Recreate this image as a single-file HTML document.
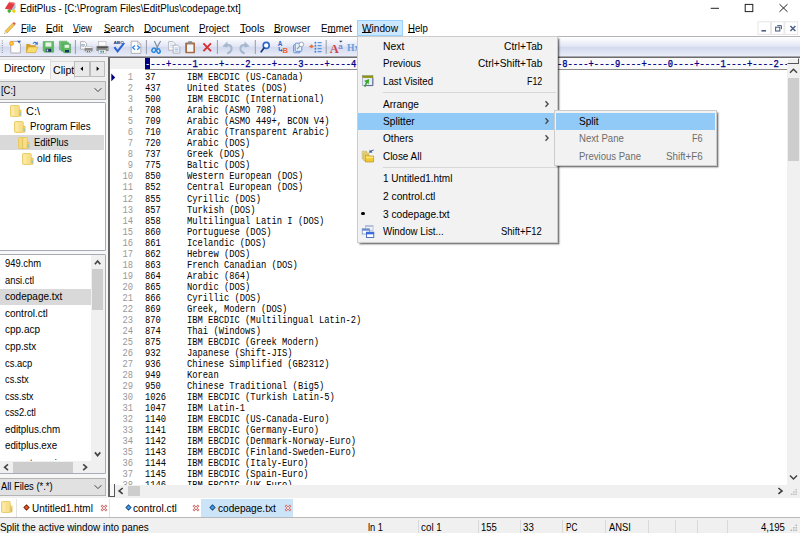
<!DOCTYPE html>
<html><head><meta charset="utf-8"><title>EditPlus</title>
<style>
*{box-sizing:border-box;margin:0;padding:0}
html,body{width:800px;height:533px;overflow:hidden;background:#f0f0f0}
body{position:relative;font-family:"Liberation Sans",sans-serif;color:#000}
.a{position:absolute;display:block}
.t{position:absolute;white-space:pre;line-height:1;color:#000;font-size:10.6px;transform-origin:0 0}
.m{position:absolute;white-space:pre;line-height:1;font-family:"Liberation Mono",monospace;font-size:10px;color:#000;transform:scaleX(.88);transform-origin:0 0}
u{text-decoration:underline;text-underline-offset:.3px;text-decoration-thickness:.9px}
</style></head><body>
<div class="a" style="left:0px;top:0px;width:800px;height:19px;background:#fff;"></div>
<svg class="a" style="left:3px;top:1px" width="14" height="13" viewBox="0 0 14 13"><path d="M8.500 9L12.300 2.200 12.700 6.400 10.900 9.800z" fill="#a9c3df"/><path d="M1.800 7.800L6.300 .8 12.300 2.100 8.500 9.100z" fill="#e23a40"/><path d="M6.300 .8L12.300 2.100 11.700 3.100 5.700 1.800z" fill="#f28a8a"/><path d="M6.300 7.900l2.100 2.200-2.100 2.200-2.100-2.200z" fill="#3cb034"/><path d="M10.900 7.900l2.100 2.200-2.100 2.200-2.100-2.200z" fill="#f2cf00"/></svg>
<div class="t" style="left:20.15px;top:3px;transform:scaleX(0.923);">EditPlus - [C:\Program Files\EditPlus\codepage.txt]</div>
<svg class="a" style="left:705px;top:0px" width="95" height="19" viewBox="0 0 95 19"><path d="M5.7 8.3h8.3" stroke="#222" stroke-width="1"/><rect x="40.2" y="4.4" width="7.6" height="7.2" fill="none" stroke="#222" stroke-width="1"/><path d="M74.5 4.2l8 7.6M82.5 4.2l-8 7.6" stroke="#222" stroke-width="1" fill="none"/></svg>
<div class="a" style="left:0px;top:19px;width:800px;height:17px;background:#fff;"></div>
<div class="a" style="left:0px;top:36px;width:800px;height:1px;background:#b4b4b4;"></div>
<div class="a" style="left:357px;top:20px;width:45.5px;height:16px;background:#cce8ff;border:1px solid #99d1ff;"></div>
<svg class="a" style="left:2px;top:20px" width="15" height="15" viewBox="0 0 15 15"><path d="M3 11.2 L10.6 3.2 L12.6 5 L5 13Z" fill="#f4c84a" stroke="#b8862a" stroke-width=".5"/><path d="M10.6 3.2l1.3-1.3 2 1.8-1.3 1.3z" fill="#e0525a"/><path d="M3 11.2L2.2 13.8 5 13z" fill="#e9d2a8"/><path d="M2.2 13.8l.9-.3-.6-.6z" fill="#333"/></svg>
<div class="t" style="left:20.75px;top:23px;transform:scaleX(0.890);"><u>F</u>ile</div>
<div class="t" style="left:45.55px;top:23px;transform:scaleX(0.925);"><u>E</u>dit</div>
<div class="t" style="left:72.85px;top:23px;transform:scaleX(0.830);"><u>V</u>iew</div>
<div class="t" style="left:103.55px;top:23px;transform:scaleX(0.890);"><u>S</u>earch</div>
<div class="t" style="left:143.95px;top:23px;transform:scaleX(0.930);"><u>D</u>ocument</div>
<div class="t" style="left:198.95px;top:23px;transform:scaleX(0.913);"><u>P</u>roject</div>
<div class="t" style="left:239.55px;top:23px;transform:scaleX(0.991);"><u>T</u>ools</div>
<div class="t" style="left:274.15px;top:23px;transform:scaleX(0.934);"><u>B</u>rowser</div>
<div class="t" style="left:320.85px;top:23px;transform:scaleX(0.921);">E<u>m</u>met</div>
<div class="t" style="left:361.55px;top:23px;transform:scaleX(0.958);"><u>W</u>indow</div>
<div class="t" style="left:408.05px;top:23px;transform:scaleX(0.908);"><u>H</u>elp</div>
<svg class="a" style="left:757px;top:21px" width="43" height="15" viewBox="0 0 43 15"><g fill="#fff" stroke="#e6e6e6" stroke-width="1"><rect x="1" y=".8" width="12.6" height="12.6"/><rect x="14.4" y=".8" width="12.6" height="12.6"/><rect x="27.8" y=".8" width="12.6" height="12.6"/></g>
<path d="M4.4 9.8h4.6" stroke="#4d6185" stroke-width="1.6"/>
<path d="M20.2 4.6h4.2v3.6" stroke="#4d6185" stroke-width="1" fill="none"/><rect x="18.6" y="6.2" width="4.2" height="3.8" fill="none" stroke="#4d6185" stroke-width="1.1"/>
<path d="M33.4 5l5 5M38.4 5l-5 5" stroke="#4d6185" stroke-width="1.5"/></svg>
<div class="a" style="left:0px;top:37px;width:800px;height:19px;background:linear-gradient(#ffffff 0%,#f1f3fa 25%,#e3e7f5 49%,#d3daee 53%,#dae0f1 70%,#e9ecf8 100%);"></div>
<div class="a" style="left:0px;top:55.6px;width:800px;height:1.3px;background:#a6a6ae;"></div>
<svg class="a" style="left:0;top:37px" width="360" height="20" viewBox="0 37 360 20">
<g fill="#9a9aa8"><rect x="1.8" y="40.4" width="1.1" height="1.1"/><rect x="1.8" y="42.7" width="1.1" height="1.1"/><rect x="1.8" y="45" width="1.1" height="1.1"/><rect x="1.8" y="47.3" width="1.1" height="1.1"/><rect x="1.8" y="49.6" width="1.1" height="1.1"/><rect x="1.8" y="51.9" width="1.1" height="1.1"/></g>
<g stroke="#9a9aa6" stroke-width="1"><path d="M75.4 40v14M146.4 40v14M217.4 40v14M255.3 40v14M326.2 40v14"/></g>
<!-- new -->
<path d="M10.8 41.4h7l2.6 2.4v9.2h-9.6z" fill="#fdfcf8" stroke="#a8a8b0" stroke-width=".9"/>
<path d="M17 40.8h4.2l-2.1 2.4z" fill="#3060b0"/>
<circle cx="11.6" cy="43.4" r="2.3" fill="#f8a020"/><circle cx="11.6" cy="43.4" r="1.2" fill="#ffd040"/>
<!-- open -->
<path d="M26.200 44h3.600l1 1.200h5v7.400h-9.600z" fill="#d2a028"/>
<path d="M28.4 47h9.4l-2.2 5.6h-9.4z" fill="#f9dc6c" stroke="#cfa22a" stroke-width=".5"/>
<path d="M32.6 43.6c1-1.8 2.8-2.2 4.2-1.2l.8-1 .4 3.4-3.2-.4.9-.9c-.8-.6-1.8-.5-2.4.4z" fill="#3878c8"/>
<!-- save -->
<path d="M43.2 41.6h10.4v10.6H44.6l-1.4-1.4z" fill="#5dba62" stroke="#3f9a44" stroke-width=".5"/>
<rect x="45.4" y="42.4" width="6" height="4.2" fill="#e8f4e8"/>
<rect x="45.8" y="48.8" width="5.4" height="3" fill="#203060"/><rect x="46.6" y="49.4" width="1.6" height="2" fill="#d0d8e8"/>
<!-- save all -->
<path d="M59.4 41.2h7.6v8.4h-7.6z" fill="#7cc880" stroke="#4aa04e" stroke-width=".5"/>
<path d="M61 42.6h7.8v8.4H61z" fill="#6cc070" stroke="#4aa04e" stroke-width=".5"/>
<path d="M62.8 44h7.8v8.8h-6.6l-1.2-1.2z" fill="#5dba62" stroke="#3f9a44" stroke-width=".5"/>
<rect x="64.6" y="44.8" width="4.6" height="3" fill="#e8f4e8"/><rect x="65" y="50" width="4" height="2.4" fill="#203060"/>
<!-- print preview -->
<path d="M80.6 41.6h4l2 2v5.6h-6z" fill="#fafafa" stroke="#9a9a9a" stroke-width=".7"/>
<rect x="81.8" y="44.2" width="2.6" height="2" fill="#b8d0e8" stroke="#7090b0" stroke-width=".4"/>
<rect x="85.2" y="46.2" width="6.8" height="2" fill="#f4f4f4" stroke="#aaa" stroke-width=".4"/>
<rect x="84.6" y="48" width="8" height="3.2" fill="#8a8a8a"/><rect x="86" y="50.6" width="5.2" height="2" fill="#f0f0f0" stroke="#999" stroke-width=".4"/>
<rect x="87" y="51" width="1.2" height="1.2" fill="#2080d0"/><rect x="89" y="51" width="1.2" height="1.2" fill="#30a040"/>
<!-- print -->
<rect x="98.6" y="41.6" width="7.4" height="4.4" fill="#fcfcfc" stroke="#aaa" stroke-width=".5"/>
<path d="M96.4 46h12.2v5H96.4z" fill="#8c8c8c"/><path d="M97.4 46.6h10.2v1.6H97.4z" fill="#505050"/>
<rect x="98.8" y="50" width="7.2" height="3.2" fill="#f4f4f4" stroke="#999" stroke-width=".4"/>
<rect x="100.4" y="50.8" width="1.4" height="1.8" fill="#2080d0"/><rect x="102.6" y="50.8" width="1.4" height="1.8" fill="#30a040"/><circle cx="107.4" cy="48.6" r=".7" fill="#70e070"/>
<!-- spell -->
<text x="113.400" y="44.300" font-family="Liberation Sans,sans-serif" font-size="4.300" font-weight="bold" fill="#203880" textLength="10.400" lengthAdjust="spacingAndGlyphs">ABC</text>
<path d="M114.400 47.200L117.600 51.400 124.200 42.900" fill="none" stroke="#2a62d4" stroke-width="2"/>
<!-- html page -->
<path d="M131.2 41.2h6.6l3 3v9.2h-9.6z" fill="#fdfdfd" stroke="#a0a0a8" stroke-width=".8"/><path d="M137.8 41.2v3h3" fill="none" stroke="#a0a0a8" stroke-width=".6"/>
<path d="M135 45.4l-2.4 2.2 2.4 2.2M137.2 45.4l2.4 2.2-2.4 2.2" fill="none" stroke="#3088e8" stroke-width="1.3"/>
<!-- cut -->
<path d="M154.4 41l3.4 7.6M160.6 41l-4.2 7.6" stroke="#8090a0" stroke-width="1.2" fill="none"/>
<ellipse cx="153.8" cy="50.2" rx="1.8" ry="2.2" fill="none" stroke="#2888e0" stroke-width="1.5" transform="rotate(25 153.8 50.2)"/>
<ellipse cx="158.4" cy="51" rx="1.7" ry="2.2" fill="none" stroke="#2888e0" stroke-width="1.5" transform="rotate(-20 158.4 51)"/>
<!-- copy -->
<path d="M168.6 41.6h4.4l2 2v6.6h-6.4z" fill="#fcfcfc" stroke="#a0a0a8" stroke-width=".7"/>
<path d="M170 44h3M170 45.6h3.4M170 47.2h3.4" stroke="#a8c4e0" stroke-width=".6"/>
<path d="M173.2 45.2h4.4l2.2 2v6h-6.6z" fill="#fcfcfc" stroke="#9898a0" stroke-width=".7"/>
<path d="M174.6 48h3.8M174.6 49.6h3.8M174.6 51.2h3.8" stroke="#80a8d8" stroke-width=".7"/>
<!-- paste -->
<rect x="185.2" y="42.6" width="9.8" height="10.6" rx=".8" fill="#a86a40"/>
<rect x="187" y="44.4" width="6.4" height="7.4" fill="#f0f6fc"/>
<rect x="188" y="41.2" width="4.2" height="2.6" rx=".6" fill="#8a8a90"/>
<!-- delete -->
<path d="M203.4 43.4l7.6 7.8M211 43.4l-7.6 7.8" stroke="#d83030" stroke-width="1.9" fill="none"/>
<!-- undo -->
<path d="M226.600 45.200C230.200 44.400 232.400 46.800 231.400 49.800 230.800 51.400 229.800 52.300 228.200 53" fill="none" stroke="#a6b8cf" stroke-width="2.300" stroke-linecap="round"/>
<path d="M222.300 46.400L227.400 41.400 227.800 47.600z" fill="#a6b8cf"/>
<!-- redo -->
<path d="M245.400 45.200C241.800 44.400 239.600 46.800 240.600 49.800 241.200 51.400 242.200 52.300 243.800 53" fill="none" stroke="#a6b8cf" stroke-width="2.300" stroke-linecap="round"/>
<path d="M249.700 46.400L244.600 41.400 244.200 47.600z" fill="#a6b8cf"/>
<!-- find -->
<circle cx="266.200" cy="45.4" r="3" fill="#fff" stroke="#2868c8" stroke-width="1.6"/>
<path d="M264 48l-2.800 3.800" stroke="#183878" stroke-width="1.7" stroke-linecap="round"/>
<!-- replace -->
<text x="277.800" y="46.4" font-family="Liberation Sans,sans-serif" font-size="6.4" font-weight="bold" fill="#2868c8">A</text>
<path d="M279.200 47v3.400h2.400" fill="none" stroke="#2868c8" stroke-width="1"/><path d="M281 49l1.800 1.400-1.800 1.400z" fill="#2868c8"/>
<text x="282.600" y="53" font-family="Liberation Sans,sans-serif" font-size="7.6" font-weight="bold" fill="#f06030">B</text>
<!-- find in files -->
<rect x="293.600" y="44.6" width="6.600" height="8.200" rx="1" fill="#dce8f8" stroke="#5888d0" stroke-width=".9"/>
<rect x="295.200" y="43.200" width="6.600" height="8.200" rx="1" fill="#e4eefa" stroke="#5888d0" stroke-width=".9"/>
<circle cx="301.400" cy="44.400" r="2.300" fill="#fff" stroke="#a0a8b4" stroke-width="1"/>
<path d="M299.800 46.200l-2.800 3" stroke="#909aa8" stroke-width="1.200"/>
<!-- goto -->
<path d="M309 46.400h2.800M311 44.800l2.400 1.600-2.400 1.600z" stroke="#f07030" stroke-width="1" fill="#f07030"/>
<g fill="#3880e0"><rect x="314.600" y="41.800" width="1.600" height="1.800"/><rect x="314.600" y="44.800" width="1.600" height="1.800"/><rect x="314.600" y="47.800" width="1.600" height="1.800"/><rect x="314.600" y="50.800" width="1.600" height="1.800"/>
<rect x="317.600" y="42.200" width="4" height="1"/><rect x="317.600" y="45.200" width="4" height="1"/><rect x="317.600" y="48.200" width="4" height="1"/><rect x="317.600" y="51.200" width="4" height="1"/></g>
<!-- font -->
<text x="329.800" y="52.600" font-family="Liberation Serif,serif" font-size="12.500" font-weight="bold" fill="#cc4450">A</text>
<text x="338.200" y="49.200" font-family="Liberation Sans,sans-serif" font-size="8" fill="#6468c8">a</text>
<path d="M339 40.800h3.600l-1.800 1.800z" fill="#303848"/>
<text x="347" y="51.400" font-family="Liberation Serif,serif" font-size="9.600" font-weight="bold" fill="#66a0dc">Hx</text>
</svg>

<div class="a" style="left:0px;top:59px;width:50.5px;height:20px;background:#fff;border-right:1px solid #dcdcdc;border-top:1px solid #e4e4e4;"></div>
<div class="a" style="left:50.5px;top:61px;width:24px;height:17.5px;background:#f3f3f3;border:1px solid #dcdcdc;border-left:none;border-bottom:none;"></div>
<div class="t" style="left:4.05px;top:63px;transform:scaleX(0.965);">Directory</div>
<div class="t" style="left:53.05px;top:65px;">Clipt</div>
<div class="a" style="left:74px;top:61px;width:15.5px;height:16px;background:#e9e9e9;border:1px solid #bdbdbd;"></div>
<div class="a" style="left:89.5px;top:61px;width:15.5px;height:16px;background:#e9e9e9;border:1px solid #bdbdbd;"></div>
<svg class="a" style="left:74px;top:61px" width="31" height="16" viewBox="0 0 31 16"><path d="M9 5.6v4.4l-2.6-2.2z" fill="#000"/><path d="M22.6 5.6v4.4l2.6-2.2z" fill="#000"/></svg>
<div class="a" style="left:0px;top:80.5px;width:105.5px;height:19px;background:#e1e1e1;border:1px solid #b4b4b4;border-left:none;"></div>
<div class="t" style="left:1.35px;top:85px;transform:scaleX(0.886);">[C:]</div>
<svg class="a" style="left:93px;top:86px" width="10" height="8" viewBox="0 0 10 8"><path d="M1.6 2.2l3.4 3.4 3.4-3.4" fill="none" stroke="#444" stroke-width="1"/></svg>
<div class="a" style="left:0px;top:100px;width:108px;height:3px;background:#f7f7f7;"></div>
<div class="a" style="left:0px;top:250px;width:108px;height:4.5px;background:#f7f7f7;"></div>
<div class="a" style="left:0px;top:473.5px;width:108px;height:4.5px;background:#f7f7f7;"></div>
<div class="a" style="left:106px;top:100px;width:2.3px;height:397px;background:#f6f6f6;"></div>
<div class="a" style="left:0px;top:102px;width:106px;height:149px;background:#fff;border:1px solid #a5acb8;border-left:none;border-radius:0 1.5px 1.5px 0"></div>
<div class="a" style="left:0px;top:135.4px;width:104px;height:14.8px;background:#d9d9d9;"></div>
<svg class="a" style="left:9.9px;top:105.1px" width="12" height="12" viewBox="0 0 12 12"><rect x=".5" y=".5" width="8.800" height="11" rx="1" fill="#f8e08a" stroke="#e6c458" stroke-width=".8"/><rect x="1.400" y="1.400" width="3" height="9.200" fill="#fcecb0" opacity=".7"/><rect x="9.200" y="5" width="2" height="6.200" rx=".5" fill="#f3d468" stroke="#dcb850" stroke-width=".5"/><rect x="9.800" y="7.400" width=".9" height="3" fill="#7fc0d8"/></svg>
<div class="t" style="left:25.65px;top:106px;transform:scaleX(1.033);">C:\</div>
<svg class="a" style="left:13.5px;top:120.8px" width="12" height="12" viewBox="0 0 12 12"><rect x=".5" y=".5" width="8.800" height="11" rx="1" fill="#f8e08a" stroke="#e6c458" stroke-width=".8"/><rect x="1.400" y="1.400" width="3" height="9.200" fill="#fcecb0" opacity=".7"/><rect x="9.200" y="5" width="2" height="6.200" rx=".5" fill="#f3d468" stroke="#dcb850" stroke-width=".5"/><rect x="9.800" y="7.400" width=".9" height="3" fill="#7fc0d8"/></svg>
<div class="t" style="left:30.05px;top:121px;transform:scaleX(0.918);">Program Files</div>
<svg class="a" style="left:18.3px;top:136.8px" width="12" height="12" viewBox="0 0 12 12"><rect x=".5" y=".5" width="8.800" height="11" rx="1" fill="#f8e08a" stroke="#e6c458" stroke-width=".8"/><rect x="1.400" y="1.400" width="3" height="9.200" fill="#fcecb0" opacity=".7"/><path d="M4.600 .8v10.400" stroke="#dcb850" stroke-width=".8"/><path d="M.6 1h3.600v10.400H.6z" fill="#eccc60" opacity=".55"/><rect x="9.200" y="5" width="2" height="6.200" rx=".5" fill="#f3d468" stroke="#dcb850" stroke-width=".5"/><rect x="9.800" y="7.400" width=".9" height="3" fill="#7fc0d8"/></svg>
<div class="t" style="left:33.65px;top:137px;transform:scaleX(0.887);">EditPlus</div>
<svg class="a" style="left:21.7px;top:152.8px" width="12" height="12" viewBox="0 0 12 12"><rect x=".5" y=".5" width="8.800" height="11" rx="1" fill="#f8e08a" stroke="#e6c458" stroke-width=".8"/><rect x="1.400" y="1.400" width="3" height="9.200" fill="#fcecb0" opacity=".7"/><rect x="9.200" y="5" width="2" height="6.200" rx=".5" fill="#f3d468" stroke="#dcb850" stroke-width=".5"/><rect x="9.800" y="7.400" width=".9" height="3" fill="#7fc0d8"/></svg>
<div class="t" style="left:37.35px;top:153px;transform:scaleX(0.972);">old files</div>
<div class="a" style="left:0px;top:253.5px;width:106px;height:220.5px;background:#fff;border:1px solid #a5acb8;border-left:none;border-radius:0 1.5px 1.5px 0;overflow:hidden;"></div>
<div class="a" style="left:0px;top:288.8px;width:90.8px;height:15.8px;background:#d9d9d9;"></div>
<div class="t" style="left:4.95px;top:258px;transform:scaleX(0.888);">949.chm</div>
<div class="t" style="left:4.95px;top:275px;transform:scaleX(0.882);">ansi.ctl</div>
<div class="t" style="left:4.95px;top:291px;transform:scaleX(0.946);">codepage.txt</div>
<div class="t" style="left:4.95px;top:308px;transform:scaleX(0.944);">control.ctl</div>
<div class="t" style="left:4.95px;top:324px;transform:scaleX(0.943);">cpp.acp</div>
<div class="t" style="left:4.95px;top:341px;transform:scaleX(0.930);">cpp.stx</div>
<div class="t" style="left:4.95px;top:358px;transform:scaleX(0.888);">cs.acp</div>
<div class="t" style="left:4.95px;top:374px;transform:scaleX(0.875);">cs.stx</div>
<div class="t" style="left:4.95px;top:391px;transform:scaleX(0.880);">css.stx</div>
<div class="t" style="left:4.95px;top:407px;transform:scaleX(0.875);">css2.ctl</div>
<div class="t" style="left:4.95px;top:424px;transform:scaleX(0.926);">editplus.chm</div>
<div class="t" style="left:4.95px;top:440px;transform:scaleX(0.921);">editplus.exe</div>
<div class="t" style="left:4.95px;top:458px;transform:scaleX(0.846);">emmet_epp.js</div>
<div class="a" style="left:91.3px;top:254.5px;width:13.7px;height:207px;background:#f0f0f0;"></div>
<div class="a" style="left:92.3px;top:269px;width:11.2px;height:41px;background:#cdcdcd;"></div>
<svg class="a" style="left:92px;top:257px" width="12" height="10" viewBox="0 0 12 10"><path d="M2.900 7.200l2.700-3.200 2.700 3.200" fill="none" stroke="#454545" stroke-width="1.700"/></svg>
<svg class="a" style="left:92px;top:449px" width="12" height="10" viewBox="0 0 12 10"><path d="M2.900 3.400l2.700 3.200 2.700-3.200" fill="none" stroke="#454545" stroke-width="1.700"/></svg>
<div class="a" style="left:0px;top:461px;width:105px;height:12px;background:#f0f0f0;"></div>
<div class="a" style="left:13px;top:462px;width:60px;height:10.5px;background:#cdcdcd;"></div>
<svg class="a" style="left:1px;top:461px" width="10" height="12" viewBox="0 0 10 12"><path d="M7 3.300l-3.400 2.900 3.400 2.900" fill="none" stroke="#454545" stroke-width="1.600"/></svg>
<svg class="a" style="left:80px;top:461px" width="10" height="12" viewBox="0 0 10 12"><path d="M3.200 3.300l3.400 2.900-3.400 2.900" fill="none" stroke="#454545" stroke-width="1.600"/></svg>
<div class="a" style="left:0px;top:477.5px;width:105.5px;height:18.5px;background:#e1e1e1;border:1px solid #b4b4b4;border-left:none;"></div>
<div class="t" style="left:1.25px;top:481px;transform:scaleX(0.884);">All Files (*.*)</div>
<svg class="a" style="left:93px;top:483px" width="10" height="8" viewBox="0 0 10 8"><path d="M1.6 2.2l3.4 3.4 3.4-3.4" fill="none" stroke="#444" stroke-width="1"/></svg>
<div class="a" style="left:108px;top:56.8px;width:1.5px;height:440.4px;background:#666;"></div>
<div class="a" style="left:108px;top:57.1px;width:692px;height:1.2px;background:#6c6c6c;"></div>
<div class="a" style="left:109.5px;top:57.5px;width:690.5px;height:427.5px;background:#fff;overflow:hidden;"><div class="a" style="left:0px;top:0px;width:677.5px;height:12.6px;background:#f9f9f9;border-bottom:1px solid #8c8c8c;"></div>
<div class="a" style="left:0px;top:0px;width:35.2px;height:12.6px;background:#f0f0f0;border-bottom:1px solid #fff;"></div>
<div class="m" style="left:35.2px;top:2px;color:#00008b;width:729.6px;overflow:hidden;-webkit-text-stroke:.3px #00008b">----+----1----+----2----+----3----+----4----+----5----+----6----+----7----+----8----+----9----+----0----+----1----+----2----</div>
<div class="a" style="left:35.2px;top:0px;width:5.3px;height:11.6px;background:#000080;"></div>
<div class="m" style="left:35.2px;top:2px;color:#fff">-</div>
<svg class="a" style="left:1.5px;top:15px" width="5" height="9" viewBox="0 0 5 9"><path d="M.3 .6v7.6L4.2 4.4z" fill="#000080"/></svg>
<div class="m" style="top:15.00px;left:0;width:23px;text-align:right;color:#999;transform-origin:100% 0">1</div><div class="m" style="top:15.00px;left:35.2px">37</div><div class="m" style="top:15.00px;left:77.4px">IBM EBCDIC (US-Canada)</div>
<div class="m" style="top:26.00px;left:0;width:23px;text-align:right;color:#999;transform-origin:100% 0">2</div><div class="m" style="top:26.00px;left:35.2px">437</div><div class="m" style="top:26.00px;left:77.4px">United States (DOS)</div>
<div class="m" style="top:37.00px;left:0;width:23px;text-align:right;color:#999;transform-origin:100% 0">3</div><div class="m" style="top:37.00px;left:35.2px">500</div><div class="m" style="top:37.00px;left:77.4px">IBM EBCDIC (International)</div>
<div class="m" style="top:48.00px;left:0;width:23px;text-align:right;color:#999;transform-origin:100% 0">4</div><div class="m" style="top:48.00px;left:35.2px">708</div><div class="m" style="top:48.00px;left:77.4px">Arabic (ASMO 708)</div>
<div class="m" style="top:59.00px;left:0;width:23px;text-align:right;color:#999;transform-origin:100% 0">5</div><div class="m" style="top:59.00px;left:35.2px">709</div><div class="m" style="top:59.00px;left:77.4px">Arabic (ASMO 449+, BCON V4)</div>
<div class="m" style="top:70.00px;left:0;width:23px;text-align:right;color:#999;transform-origin:100% 0">6</div><div class="m" style="top:70.00px;left:35.2px">710</div><div class="m" style="top:70.00px;left:77.4px">Arabic (Transparent Arabic)</div>
<div class="m" style="top:81.00px;left:0;width:23px;text-align:right;color:#999;transform-origin:100% 0">7</div><div class="m" style="top:81.00px;left:35.2px">720</div><div class="m" style="top:81.00px;left:77.4px">Arabic (DOS)</div>
<div class="m" style="top:92.00px;left:0;width:23px;text-align:right;color:#999;transform-origin:100% 0">8</div><div class="m" style="top:92.00px;left:35.2px">737</div><div class="m" style="top:92.00px;left:77.4px">Greek (DOS)</div>
<div class="m" style="top:103.00px;left:0;width:23px;text-align:right;color:#999;transform-origin:100% 0">9</div><div class="m" style="top:103.00px;left:35.2px">775</div><div class="m" style="top:103.00px;left:77.4px">Baltic (DOS)</div>
<div class="m" style="top:114.00px;left:0;width:23px;text-align:right;color:#999;transform-origin:100% 0">10</div><div class="m" style="top:114.00px;left:35.2px">850</div><div class="m" style="top:114.00px;left:77.4px">Western European (DOS)</div>
<div class="m" style="top:125.00px;left:0;width:23px;text-align:right;color:#999;transform-origin:100% 0">11</div><div class="m" style="top:125.00px;left:35.2px">852</div><div class="m" style="top:125.00px;left:77.4px">Central European (DOS)</div>
<div class="m" style="top:137.00px;left:0;width:23px;text-align:right;color:#999;transform-origin:100% 0">12</div><div class="m" style="top:137.00px;left:35.2px">855</div><div class="m" style="top:137.00px;left:77.4px">Cyrillic (DOS)</div>
<div class="m" style="top:148.00px;left:0;width:23px;text-align:right;color:#999;transform-origin:100% 0">13</div><div class="m" style="top:148.00px;left:35.2px">857</div><div class="m" style="top:148.00px;left:77.4px">Turkish (DOS)</div>
<div class="m" style="top:159.00px;left:0;width:23px;text-align:right;color:#999;transform-origin:100% 0">14</div><div class="m" style="top:159.00px;left:35.2px">858</div><div class="m" style="top:159.00px;left:77.4px">Multilingual Latin I (DOS)</div>
<div class="m" style="top:170.00px;left:0;width:23px;text-align:right;color:#999;transform-origin:100% 0">15</div><div class="m" style="top:170.00px;left:35.2px">860</div><div class="m" style="top:170.00px;left:77.4px">Portuguese (DOS)</div>
<div class="m" style="top:181.00px;left:0;width:23px;text-align:right;color:#999;transform-origin:100% 0">16</div><div class="m" style="top:181.00px;left:35.2px">861</div><div class="m" style="top:181.00px;left:77.4px">Icelandic (DOS)</div>
<div class="m" style="top:192.00px;left:0;width:23px;text-align:right;color:#999;transform-origin:100% 0">17</div><div class="m" style="top:192.00px;left:35.2px">862</div><div class="m" style="top:192.00px;left:77.4px">Hebrew (DOS)</div>
<div class="m" style="top:203.00px;left:0;width:23px;text-align:right;color:#999;transform-origin:100% 0">18</div><div class="m" style="top:203.00px;left:35.2px">863</div><div class="m" style="top:203.00px;left:77.4px">French Canadian (DOS)</div>
<div class="m" style="top:214.00px;left:0;width:23px;text-align:right;color:#999;transform-origin:100% 0">19</div><div class="m" style="top:214.00px;left:35.2px">864</div><div class="m" style="top:214.00px;left:77.4px">Arabic (864)</div>
<div class="m" style="top:225.00px;left:0;width:23px;text-align:right;color:#999;transform-origin:100% 0">20</div><div class="m" style="top:225.00px;left:35.2px">865</div><div class="m" style="top:225.00px;left:77.4px">Nordic (DOS)</div>
<div class="m" style="top:236.00px;left:0;width:23px;text-align:right;color:#999;transform-origin:100% 0">21</div><div class="m" style="top:236.00px;left:35.2px">866</div><div class="m" style="top:236.00px;left:77.4px">Cyrillic (DOS)</div>
<div class="m" style="top:247.00px;left:0;width:23px;text-align:right;color:#999;transform-origin:100% 0">22</div><div class="m" style="top:247.00px;left:35.2px">869</div><div class="m" style="top:247.00px;left:77.4px">Greek, Modern (DOS)</div>
<div class="m" style="top:258.00px;left:0;width:23px;text-align:right;color:#999;transform-origin:100% 0">23</div><div class="m" style="top:258.00px;left:35.2px">870</div><div class="m" style="top:258.00px;left:77.4px">IBM EBCDIC (Multilingual Latin-2)</div>
<div class="m" style="top:269.00px;left:0;width:23px;text-align:right;color:#999;transform-origin:100% 0">24</div><div class="m" style="top:269.00px;left:35.2px">874</div><div class="m" style="top:269.00px;left:77.4px">Thai (Windows)</div>
<div class="m" style="top:280.00px;left:0;width:23px;text-align:right;color:#999;transform-origin:100% 0">25</div><div class="m" style="top:280.00px;left:35.2px">875</div><div class="m" style="top:280.00px;left:77.4px">IBM EBCDIC (Greek Modern)</div>
<div class="m" style="top:291.00px;left:0;width:23px;text-align:right;color:#999;transform-origin:100% 0">26</div><div class="m" style="top:291.00px;left:35.2px">932</div><div class="m" style="top:291.00px;left:77.4px">Japanese (Shift-JIS)</div>
<div class="m" style="top:302.00px;left:0;width:23px;text-align:right;color:#999;transform-origin:100% 0">27</div><div class="m" style="top:302.00px;left:35.2px">936</div><div class="m" style="top:302.00px;left:77.4px">Chinese Simplified (GB2312)</div>
<div class="m" style="top:313.00px;left:0;width:23px;text-align:right;color:#999;transform-origin:100% 0">28</div><div class="m" style="top:313.00px;left:35.2px">949</div><div class="m" style="top:313.00px;left:77.4px">Korean</div>
<div class="m" style="top:324.00px;left:0;width:23px;text-align:right;color:#999;transform-origin:100% 0">29</div><div class="m" style="top:324.00px;left:35.2px">950</div><div class="m" style="top:324.00px;left:77.4px">Chinese Traditional (Big5)</div>
<div class="m" style="top:335.00px;left:0;width:23px;text-align:right;color:#999;transform-origin:100% 0">30</div><div class="m" style="top:335.00px;left:35.2px">1026</div><div class="m" style="top:335.00px;left:77.4px">IBM EBCDIC (Turkish Latin-5)</div>
<div class="m" style="top:346.00px;left:0;width:23px;text-align:right;color:#999;transform-origin:100% 0">31</div><div class="m" style="top:346.00px;left:35.2px">1047</div><div class="m" style="top:346.00px;left:77.4px">IBM Latin-1</div>
<div class="m" style="top:357.00px;left:0;width:23px;text-align:right;color:#999;transform-origin:100% 0">32</div><div class="m" style="top:357.00px;left:35.2px">1140</div><div class="m" style="top:357.00px;left:77.4px">IBM EBCDIC (US-Canada-Euro)</div>
<div class="m" style="top:368.00px;left:0;width:23px;text-align:right;color:#999;transform-origin:100% 0">33</div><div class="m" style="top:368.00px;left:35.2px">1141</div><div class="m" style="top:368.00px;left:77.4px">IBM EBCDIC (Germany-Euro)</div>
<div class="m" style="top:379.00px;left:0;width:23px;text-align:right;color:#999;transform-origin:100% 0">34</div><div class="m" style="top:379.00px;left:35.2px">1142</div><div class="m" style="top:379.00px;left:77.4px">IBM EBCDIC (Denmark-Norway-Euro)</div>
<div class="m" style="top:390.00px;left:0;width:23px;text-align:right;color:#999;transform-origin:100% 0">35</div><div class="m" style="top:390.00px;left:35.2px">1143</div><div class="m" style="top:390.00px;left:77.4px">IBM EBCDIC (Finland-Sweden-Euro)</div>
<div class="m" style="top:401.00px;left:0;width:23px;text-align:right;color:#999;transform-origin:100% 0">36</div><div class="m" style="top:401.00px;left:35.2px">1144</div><div class="m" style="top:401.00px;left:77.4px">IBM EBCDIC (Italy-Euro)</div>
<div class="m" style="top:412.00px;left:0;width:23px;text-align:right;color:#999;transform-origin:100% 0">37</div><div class="m" style="top:412.00px;left:35.2px">1145</div><div class="m" style="top:412.00px;left:77.4px">IBM EBCDIC (Spain-Euro)</div>
<div class="m" style="top:423.00px;left:0;width:23px;text-align:right;color:#999;transform-origin:100% 0">38</div><div class="m" style="top:423.00px;left:35.2px">1146</div><div class="m" style="top:423.00px;left:77.4px">IBM EBCDIC (UK-Euro)</div></div>
<div class="a" style="left:108px;top:57.1px;width:692px;height:1.2px;background:#6c6c6c;"></div>
<div class="a" style="left:787px;top:57.5px;width:13px;height:427.5px;background:#f0f0f0;"></div>
<div class="a" style="left:786.8px;top:57.5px;width:12.4px;height:6px;background:#f0f0f0;border:1px solid #fff;border-right:1.3px solid #555;border-bottom:1.3px solid #555;"></div>
<div class="a" style="left:788px;top:77.7px;width:11px;height:83.5px;background:#cdcdcd;"></div>
<svg class="a" style="left:787px;top:66px" width="13" height="10" viewBox="0 0 13 10"><path d="M3 6.8l3.5-3.5 3.5 3.5" fill="none" stroke="#404040" stroke-width="1.4"/></svg>
<svg class="a" style="left:787px;top:472px" width="13" height="10" viewBox="0 0 13 10"><path d="M3 3.4l3.5 3.5 3.5-3.5" fill="none" stroke="#404040" stroke-width="1.4"/></svg>
<div class="a" style="left:109.5px;top:485px;width:690.5px;height:13px;background:#f0f0f0;"></div>
<div class="a" style="left:109.5px;top:484.2px;width:5.4px;height:13px;background:#f8f8f8;border-right:1.2px solid #555;border-bottom:1.2px solid #555;"></div>
<div class="a" style="left:127.7px;top:485.6px;width:12px;height:10.8px;background:#cdcdcd;"></div>
<svg class="a" style="left:116px;top:485px" width="10" height="12" viewBox="0 0 10 12"><path d="M6.700 3l-3.600 2.900 3.600 2.900" fill="none" stroke="#404040" stroke-width="1.600"/></svg>
<svg class="a" style="left:775px;top:485px" width="10" height="12" viewBox="0 0 10 12"><path d="M3.400 3l3.600 2.900-3.600 2.900" fill="none" stroke="#404040" stroke-width="1.600"/></svg>
<svg class="a" style="left:790px;top:488px" width="9" height="9" viewBox="0 0 9 9"><g fill="#b8b8b8"><rect x="5.5" y="1" width="1.4" height="1.4"/><rect x="3.2" y="3.3" width="1.4" height="1.4"/><rect x="5.5" y="3.3" width="1.4" height="1.4"/><rect x="1" y="5.6" width="1.4" height="1.4"/><rect x="3.2" y="5.6" width="1.4" height="1.4"/><rect x="5.5" y="5.6" width="1.4" height="1.4"/></g></svg>
<div class="a" style="left:0px;top:498px;width:800px;height:19.5px;background:#fff;"></div>
<div class="a" style="left:16px;top:499px;width:1px;height:18px;background:#e3e3e3;"></div>
<div class="a" style="left:109px;top:499px;width:1px;height:18px;background:#e3e3e3;"></div>
<div class="a" style="left:201.2px;top:499px;width:92.2px;height:17.8px;background:#cce4f7;"></div>
<svg class="a" style="left:0.5px;top:501px" width="12" height="12" viewBox="0 0 12 12"><rect x=".5" y=".5" width="8.800" height="11" rx="1" fill="#f8e08a" stroke="#e6c458" stroke-width=".8"/><rect x="1.400" y="1.400" width="3" height="9.200" fill="#fcecb0" opacity=".7"/><rect x="9.200" y="5" width="2" height="6.200" rx=".5" fill="#f3d468" stroke="#dcb850" stroke-width=".5"/><rect x="9.800" y="7.400" width=".9" height="3" fill="#7fc0d8"/></svg>
<svg class="a" style="left:23.4px;top:504.4px" width="7" height="7" viewBox="0 0 7 7"><path d="M3.5 .3L6.7 3.5 3.5 6.700 .3 3.5z" fill="#5a1800"/><path d="M3.5 1.400L5.600 3.5 3.5 5.600 1.400 3.5z" fill="#f05a20"/></svg>
<div class="t" style="left:32.15px;top:503px;transform:scaleX(0.940);">Untitled1.html</div>
<svg class="a" style="left:99.8px;top:503.7px" width="8" height="8" viewBox="0 0 8 8"><path d="M1.300 1.300l5.400 5.400M6.700 1.300L1.300 6.700" stroke="#cf6f6f" stroke-width="2.300"/><path d="M1.700 1.700l4.600 4.600M6.300 1.700L1.700 6.300" stroke="#fdeeee" stroke-width=".9"/></svg>
<svg class="a" style="left:125px;top:504.4px" width="7" height="7" viewBox="0 0 7 7"><path d="M3.5 .3L6.7 3.5 3.5 6.700 .3 3.5z" fill="#103c70"/><path d="M3.5 1.400L5.600 3.5 3.5 5.600 1.400 3.5z" fill="#40a0f0"/></svg>
<div class="t" style="left:133.15px;top:503px;transform:scaleX(0.966);">control.ctl</div>
<svg class="a" style="left:191.8px;top:503.7px" width="8" height="8" viewBox="0 0 8 8"><path d="M1.300 1.300l5.400 5.400M6.700 1.300L1.300 6.700" stroke="#cf6f6f" stroke-width="2.300"/><path d="M1.700 1.700l4.600 4.600M6.300 1.700L1.700 6.300" stroke="#fdeeee" stroke-width=".9"/></svg>
<svg class="a" style="left:209.2px;top:504.4px" width="7" height="7" viewBox="0 0 7 7"><path d="M3.5 .3L6.7 3.5 3.5 6.700 .3 3.5z" fill="#103c70"/><path d="M3.5 1.400L5.600 3.5 3.5 5.600 1.400 3.5z" fill="#40a0f0"/></svg>
<div class="t" style="left:217.85px;top:503px;transform:scaleX(0.953);">codepage.txt</div>
<svg class="a" style="left:283.6px;top:503.7px" width="8" height="8" viewBox="0 0 8 8"><path d="M1.300 1.300l5.400 5.400M6.700 1.300L1.300 6.700" stroke="#cf6f6f" stroke-width="2.300"/><path d="M1.700 1.700l4.600 4.600M6.300 1.700L1.700 6.300" stroke="#fdeeee" stroke-width=".9"/></svg>
<div class="a" style="left:0px;top:517.4px;width:800px;height:1px;background:#b9b9b9;"></div>
<div class="a" style="left:0px;top:518.4px;width:800px;height:15px;background:#f0f0f0;"></div>
<div class="t" style="left:0.15px;top:522px;transform:scaleX(0.935);">Split the active window into panes</div>
<div class="a" style="left:418px;top:520px;width:1px;height:13px;background:#d9d9d9;"></div>
<div class="a" style="left:477.5px;top:520px;width:1px;height:13px;background:#d9d9d9;"></div>
<div class="a" style="left:520px;top:520px;width:1px;height:13px;background:#d9d9d9;"></div>
<div class="a" style="left:562.2px;top:520px;width:1px;height:13px;background:#d9d9d9;"></div>
<div class="a" style="left:605px;top:520px;width:1px;height:13px;background:#d9d9d9;"></div>
<div class="a" style="left:647.6px;top:520px;width:1px;height:13px;background:#d9d9d9;"></div>
<div class="a" style="left:674.6px;top:520px;width:1px;height:13px;background:#d9d9d9;"></div>
<div class="a" style="left:697.4px;top:520px;width:1px;height:13px;background:#d9d9d9;"></div>
<div class="a" style="left:727.4px;top:520px;width:1px;height:13px;background:#d9d9d9;"></div>
<div class="t" style="left:368.05px;top:522px;transform:scaleX(0.878);">ln 1</div>
<div class="t" style="left:421.15px;top:522px;transform:scaleX(0.929);">col 1</div>
<div class="t" style="left:480.55px;top:522px;transform:scaleX(0.899);">155</div>
<div class="t" style="left:523.25px;top:522px;transform:scaleX(0.915);">33</div>
<div class="t" style="left:565.55px;top:522px;transform:scaleX(0.775);">PC</div>
<div class="t" style="left:609.05px;top:522px;transform:scaleX(0.885);">ANSI</div>
<div class="t" style="left:761.05px;top:522px;transform:scaleX(0.901);">4,195</div>
<svg class="a" style="left:789px;top:523px" width="10" height="10" viewBox="0 0 10 10"><g fill="#b4b4b4"><rect x="6.5" y="1.5" width="1.5" height="1.5"/><rect x="4" y="4" width="1.5" height="1.5"/><rect x="6.5" y="4" width="1.5" height="1.5"/><rect x="1.5" y="6.5" width="1.5" height="1.5"/><rect x="4" y="6.5" width="1.5" height="1.5"/><rect x="6.5" y="6.5" width="1.5" height="1.5"/></g></svg>
<div class="a" style="left:357px;top:35.5px;width:200.7px;height:207.6px;background:#f2f2f2;border:1px solid #ccc;box-shadow:1.600px 1.600px 1.600px rgba(0,0,0,.5);"></div>
<div class="a" style="left:358.2px;top:113px;width:198.2px;height:16.7px;background:#91c9f7;"></div>
<div class="a" style="left:383px;top:92.4px;width:172.5px;height:1px;background:#d7d7d7;"></div>
<div class="a" style="left:383px;top:167.2px;width:172.5px;height:1px;background:#d7d7d7;"></div>
<div class="t" style="left:383.35px;top:41px;transform:scaleX(0.977);">Next</div>
<div class="t" style="left:503.55px;top:41px;transform:scaleX(0.971);">Ctrl+Tab</div>
<div class="t" style="left:383.35px;top:58px;transform:scaleX(0.917);">Previous</div>
<div class="t" style="left:477.75px;top:58px;transform:scaleX(0.959);">Ctrl+Shift+Tab</div>
<div class="t" style="left:383.35px;top:76px;transform:scaleX(0.918);">Last Visited</div>
<div class="t" style="left:526.95px;top:76px;transform:scaleX(0.832);">F12</div>
<div class="t" style="left:383.35px;top:99px;transform:scaleX(0.952);">Arrange</div>
<div class="t" style="left:383.35px;top:116px;transform:scaleX(0.961);">Splitter</div>
<div class="t" style="left:383.35px;top:133px;transform:scaleX(0.953);">Others</div>
<div class="t" style="left:383.35px;top:151px;transform:scaleX(0.936);">Close All</div>
<div class="t" style="left:383.35px;top:173px;transform:scaleX(0.943);">1 Untitled1.html</div>
<div class="t" style="left:383.35px;top:191px;transform:scaleX(0.967);">2 control.ctl</div>
<div class="t" style="left:383.35px;top:209px;transform:scaleX(0.959);">3 codepage.txt</div>
<div class="t" style="left:383.35px;top:226px;transform:scaleX(0.919);">Window List...</div>
<div class="t" style="left:501.35px;top:226px;transform:scaleX(0.894);">Shift+F12</div>
<svg class="a" style="left:543px;top:100px" width="8" height="8" viewBox="0 0 8 8"><path d="M2.500 1.200l2.600 2.800-2.600 2.800" fill="none" stroke="#484848" stroke-width="1.350"/></svg>
<svg class="a" style="left:543px;top:116.8px" width="8" height="8" viewBox="0 0 8 8"><path d="M2.500 1.200l2.600 2.800-2.600 2.800" fill="none" stroke="#484848" stroke-width="1.350"/></svg>
<svg class="a" style="left:543px;top:134px" width="8" height="8" viewBox="0 0 8 8"><path d="M2.500 1.200l2.600 2.800-2.600 2.800" fill="none" stroke="#484848" stroke-width="1.350"/></svg>
<div class="a" style="left:361.3px;top:211.5px;width:3.7px;height:3.7px;background:#000;border-radius:50%;"></div>
<svg class="a" style="left:360px;top:73px" width="16" height="16" viewBox="360 73 16 16">
<rect x="362.400" y="75.600" width="10.600" height="10" fill="#e6ebf7" stroke="#8a96b4" stroke-width=".6"/>
<path d="M372.800 77.800v7.800h-9" fill="none" stroke="#4f6086" stroke-width=".9"/>
<rect x="362.400" y="75.600" width="10.600" height="2.300" fill="#8f9410"/>
<path d="M364.200 86.400l1.600-4.200-1.600-1.400 5-1.800-.6 5.400-1.400-1.400-1.800 4.200z" fill="#3ea82e"/>
</svg>
<svg class="a" style="left:360px;top:148px" width="16" height="16" viewBox="360 148 16 16">
<path d="M362.200 151.200h4.600v7.800h-4.600z" fill="#e8d890" stroke="#b8a050" stroke-width=".5"/>
<path d="M363.800 153h5v7.600h-5z" fill="#f0dc80" stroke="#b8a050" stroke-width=".5"/>
<path d="M365.400 155h3l.8 1h4.400v6h-8.200z" fill="#f4c830" stroke="#a88820" stroke-width=".6"/>
<path d="M365.800 156.600h7.400v1.600h-7.400z" fill="#fbe680"/>
<path d="M369 152.800l.8-3 1 1c1.200-1 2.600-1.200 3.600-.6-1.200 0-2.200.6-2.800 1.400l1 1z" fill="#3a5c9c"/>
</svg>
<svg class="a" style="left:360px;top:224px" width="16" height="16" viewBox="360 224 16 16">
<rect x="365.600" y="225.400" width="7.400" height="4.800" fill="#f4f6fb" stroke="#a4b0cc" stroke-width=".7"/><rect x="365.600" y="225.400" width="7.400" height="1.700" fill="#b4c0dc"/>
<rect x="362.200" y="228.800" width="7.400" height="5.200" fill="#fdfdff" stroke="#6c84c0" stroke-width=".7"/><rect x="362.200" y="228.800" width="7.400" height="1.900" fill="#6888d0"/>
<rect x="366.400" y="232.200" width="7.400" height="5.200" fill="#fdfdff" stroke="#2c50b8" stroke-width=".8"/><rect x="366.400" y="232.200" width="7.400" height="2.100" fill="#3468e0"/>
</svg>

<div class="a" style="left:553.8px;top:110px;width:163px;height:56.3px;background:#f2f2f2;border:1px solid #ccc;box-shadow:1.600px 1.600px 1.600px rgba(0,0,0,.5);"></div>
<div class="a" style="left:556px;top:113.2px;width:159.2px;height:16.5px;background:#91c9f7;"></div>
<div class="t" style="left:579.45px;top:116px;transform:scaleX(0.951);">Split</div>
<div class="t" style="left:579.45px;top:133px;transform:scaleX(0.908);color:#6d6d6d;">Next Pane</div>
<div class="t" style="left:692.15px;top:133px;transform:scaleX(0.857);color:#6d6d6d;">F6</div>
<div class="t" style="left:579.45px;top:151px;transform:scaleX(0.900);color:#6d6d6d;">Previous Pane</div>
<div class="t" style="left:666.05px;top:151px;transform:scaleX(0.923);color:#6d6d6d;">Shift+F6</div>
</body></html>
